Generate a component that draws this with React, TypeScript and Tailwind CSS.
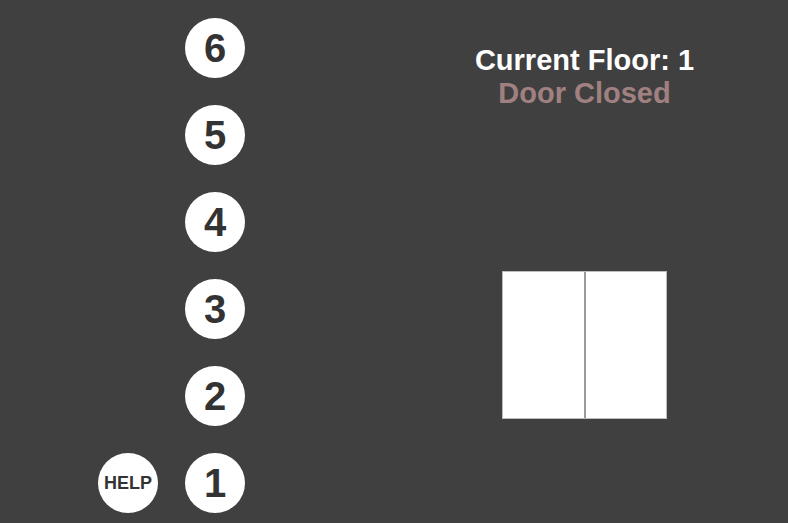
import React from "react";

const floors = [6, 5, 4, 3, 2, 1];

function FloorButton({ n }: { n: number }) {
  return (
    <button className="w-[60px] h-[60px] rounded-full bg-white text-[#333] text-[40px] font-bold flex items-center justify-center leading-none">
      {n}
    </button>
  );
}

export default function App() {
  const floor = 1;
  return (
    <div
      className="w-[788px] h-[523px] bg-[#404040] flex overflow-hidden"
      style={{ fontFamily: '"Liberation Sans", Arial, sans-serif' }}
    >
      {/* Buttons */}
      <div className="w-[381px] pt-[18px] pl-[98px] flex flex-col gap-[27px]">
        {floors.map((n) => (
          <div key={n} className="flex items-center gap-[27px]">
            <div className="w-[60px] h-[60px]">
              {n === 1 && (
                <button className="w-[60px] h-[60px] rounded-full bg-white text-[#333] text-[18px] font-bold flex items-center justify-center leading-none">
                  HELP
                </button>
              )}
            </div>
            <FloorButton n={n} />
          </div>
        ))}
      </div>

      {/* Status + door */}
      <div className="flex-1 flex flex-col items-center pt-[44px]">
        <div className="text-white text-[29px] font-bold leading-[33px]">Current Floor: {floor}</div>
        <div className="text-[#a08080] text-[29px] font-bold leading-[33px]">Door Closed</div>
        <div className="mt-[161px] flex w-[165px] h-[148px] border border-[#bdbdbd] bg-white">
          <div className="flex-1 border-r-2 border-[#9a9a9a]" />
          <div className="flex-1" />
        </div>
      </div>
    </div>
  );
}
